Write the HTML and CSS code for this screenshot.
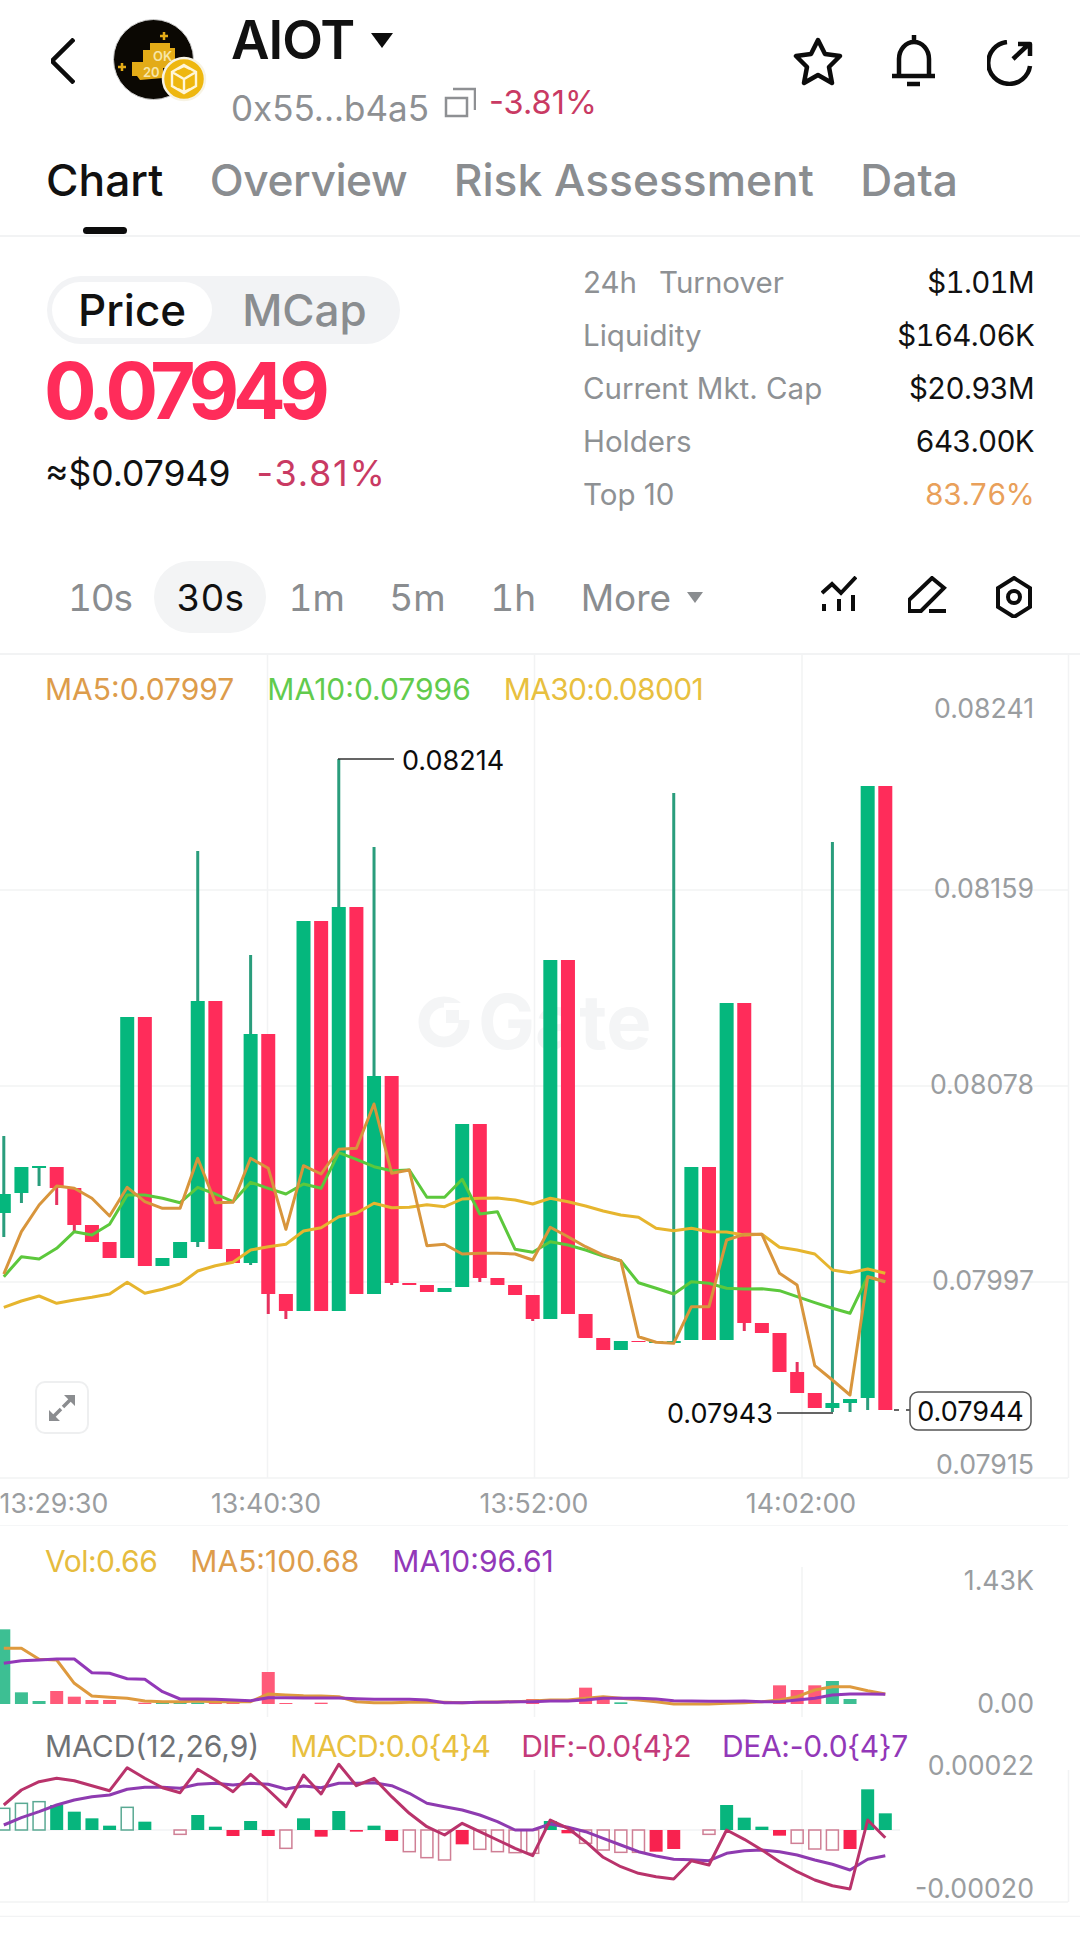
FILE: index.html
```html
<!DOCTYPE html>
<html>
<head>
  <title>AIOT Chart</title>
  <link rel="stylesheet" href="styles.css">
</head>
<body>
<div class="page">
  <div class="header">
    <svg class="back" width="24" height="46" viewBox="51 38 24 46"><polyline points="74,39 52,61 74,83" class="ink"/></svg>
    <div class="avatar">
      <svg width="81" height="81" viewBox="113 19 81 81">
        <circle cx="153.5" cy="59.5" r="40" fill="#0b0803" stroke="#cfcfcf" stroke-width="1"/>
        <polygon points="143,67 143,50 150,50 150,43 170,43 170,48 175,48 175,68 163,68 163,78 140,80 137,76 132,76 132,62 143,62" fill="#e3ab17"/>
        <text x="153" y="61" class="avatar-text">OK</text>
        <text x="143" y="77" class="avatar-text">20</text>
        <path d="M164 32v8M160 36h8M122 63v8M118 67h8" stroke="#e3ab17" stroke-width="2.5"/>
      </svg>
      <svg class="badge" width="46" height="46" viewBox="161 56 46 46">
        <circle cx="184" cy="79" r="21" fill="#eeb70f" stroke="#f7f3e4" stroke-width="2.5"/>
        <path d="M184 65l12 7v14l-12 7-12-7V72zM172 72l12 7 12-7M184 79v14M178 69l6-3 6 3M178 89l6 3 6-3" fill="none" stroke="#fff6d8" stroke-width="2.4"/>
      </svg>
    </div>
    <div class="token">
      <div class="token-name">AIOT<span class="caret-big"></span></div>
      <div class="token-sub">
        <span class="address">0x55...b4a5</span>
        <svg class="copy" width="32" height="31" viewBox="443 87 32 31"><path d="M445 98h21v18h-21zM452 89h22v21" fill="none" stroke="#8e9093" stroke-width="2.5"/></svg>
        <span class="change-small">-3.81%</span>
      </div>
    </div>
    <div class="actions">
      <svg class="act-star" width="52" height="50" viewBox="792 36 52 50"><polygon points="818,40 825,54 840,56 829,67 832,83 818,75 804,83 807,67 796,56 811,54" class="ink"/></svg>
      <svg width="44" height="52" viewBox="892 35 44 52">
        <path d="M899 76V59a15 17 0 0 1 30 0v17M892 76h43M914 35v6M907 84h13" class="ink"/>
      </svg>
      <svg class="act-share" width="46" height="46" viewBox="987 40 46 46">
        <path d="M1007 42A21 21 0 1 0 1030 66M1013 59l16-15M1018 44h12v12" class="ink"/>
      </svg>
    </div>
  </div>

  <div class="tabs">
    <div class="tab active">Chart</div>
    <div class="tab tab-overview">Overview</div>
    <div class="tab">Risk Assessment</div>
    <div class="tab">Data</div>
  </div>

  <div class="summary">
    <div class="price-box">
      <div class="switch">
        <div class="switch-item on">Price</div>
        <div class="switch-item">MCap</div>
      </div>
      <div class="price">0.07949</div>
      <div class="price-sub"><span>≈$0.07949</span><span class="down">-3.81%</span></div>
    </div>
    <div class="stats">
      <div class="stat"><span class="label"><span class="label-gap">24h</span>Turnover</span><span class="value">$1.01M</span></div>
      <div class="stat"><span class="label">Liquidity</span><span class="value">$164.06K</span></div>
      <div class="stat"><span class="label">Current Mkt. Cap</span><span class="value">$20.93M</span></div>
      <div class="stat"><span class="label">Holders</span><span class="value">643.00K</span></div>
      <div class="stat"><span class="label">Top 10</span><span class="value warn">83.76%</span></div>
    </div>
  </div>

  <div class="toolbar">
    <div class="period period-first">10s</div>
    <div class="period on">30s</div>
    <div class="period">1m</div>
    <div class="period">5m</div>
    <div class="period">1h</div>
    <div class="period">More <span class="caret-small"></span></div>
    <div class="tools">
      <svg class="tool-first" width="36" height="36" viewBox="822 579 36 36"><path d="M823 596l10-9 9 9 15-16M825 607v7M840 602v12M854 598v16" class="ink thin"/></svg>
      <svg width="39" height="38" viewBox="909 578 39 38"><path d="M933 580l12 10-23 23h-12v-11zM930 613h17" class="ink thin"/></svg>
      <svg width="38" height="42" viewBox="996 577 38 42"><path d="M1015 579l16 10v19l-16 10-16-10v-19z" class="ink thin"/><circle cx="1015" cy="598" r="6" class="ink thin"/></svg>
    </div>
  </div>

  <div class="pane pane-main">
    <svg width="1080" height="870" viewBox="0 655 1080 870">
      <path d="M0 890H1068M0 1086H1068M0 1282H1068M0 1478H1068M267.500 655V1478M534.500 655V1478M802 655V1478M1068.500 655V1478" class="grid"/>
      <circle cx="444" cy="1022" r="20" fill="none" stroke="#f4f5f6" stroke-width="11"/>
      <rect x="444" y="1003" width="26" height="17" fill="#fff"/>
      <rect x="446" y="1010" width="13" height="13" fill="#f4f5f6"/>
      <text x="478" y="1049" class="watermark">Gate</text>
      <g id="candles"></g>
      <g id="maLines"></g>
      <text x="1034" y="708" class="axis">0.08241</text>
      <text x="1034" y="888" class="axis">0.08159</text>
      <text x="1034" y="1084" class="axis">0.08078</text>
      <text x="1034" y="1280" class="axis">0.07997</text>
      <text x="1034" y="1464" class="axis">0.07915</text>
      <path d="M338 759H394M777 1413H833M894 1410H899M906 1410H910" class="marker"/>
      <text x="402" y="760" class="mark-text">0.08214</text>
      <text x="667" y="1413" class="mark-text">0.07943</text>
      <rect x="910" y="1392" width="121" height="38" rx="8" fill="#fff" stroke="#555" stroke-width="1.500"/>
      <text x="970.500" y="1411" class="mark-text mid">0.07944</text>
      <text x="54" y="1503" class="axis mid">13:29:30</text>
      <text x="266" y="1503" class="axis mid">13:40:30</text>
      <text x="534" y="1503" class="axis mid">13:52:00</text>
      <text x="801" y="1503" class="axis mid">14:02:00</text>
    </svg>
    <div class="legend legend-main">
      <span class="c-ma5">MA5:0.07997</span>
      <span class="c-ma10">MA10:0.07996</span>
      <span class="c-ma30 tight">MA30:0.08001</span>
    </div>
    <div class="expand">
      <svg width="28" height="28" viewBox="48 1394 28 28"><path d="M64 1395h11v11zM49 1410v11h11z" fill="#8b8d90"/><path d="M70 1400l-7 7M54 1416l7-7" stroke="#8b8d90" stroke-width="3.500"/></svg>
    </div>
  </div>

  <div class="pane pane-vol">
    <svg width="1080" height="192" viewBox="0 1525 1080 192">
      <path d="M0 1525H1068" class="grid"/>
      <path d="M267.500 1567V1717M534.500 1567V1717M802 1567V1717" class="grid"/>
      <g id="volBars"></g>
      <g id="volLines"></g>
      <text x="1034" y="1580" class="axis">1.43K</text>
      <text x="1034" y="1703" class="axis">0.00</text>
    </svg>
    <div class="legend legend-vol">
      <span class="c-vol">Vol:0.66</span>
      <span class="c-ma5">MA5:100.68</span>
      <span class="c-purple">MA10:96.61</span>
    </div>
  </div>

  <div class="pane pane-macd">
    <svg width="1080" height="200" viewBox="0 1717 1080 200">
      <path d="M0 1902H1068M267.500 1770V1902M534.500 1770V1902M802 1770V1902M1068.500 1770V1902" class="grid"/>
      <path d="M0 1830H900" class="grid"/>
      <path d="M0 1916.500H1080" class="grid"/>
      <g id="macdBars"></g>
      <g id="macdLines"></g>
      <text x="1034" y="1765" class="axis">0.00022</text>
      <text x="1034" y="1888" class="axis">-0.00020</text>
    </svg>
    <div class="legend legend-macd">
      <span class="c-gray">MACD(12,26,9)</span>
      <span class="c-ma30 tight">MACD:0.0{4}4</span>
      <span class="c-dif tight">DIF:-0.0{4}2</span>
      <span class="c-purple slight">DEA:-0.0{4}7</span>
    </div>
  </div>
</div>
<script src="chart.js"></script>
</body>
</html>
```

FILE: styles.css
```css
body {
  margin: 0;
  padding: 0;
  background: #fff;
  color: #111;
  font-family: Inter, "Liberation Sans", sans-serif;
}
svg {
  display: block;
}
.page {
  width: 1080px;
  height: 1935px;
  overflow: hidden;
}
.ink {
  fill: none;
  stroke: #0c0c0c;
  stroke-width: 4.5;
  stroke-linejoin: round;
}
.thin {
  stroke-width: 4;
  stroke-linejoin: miter;
}

/* header */
.header {
  display: flex;
  align-items: flex-start;
  height: 126px;
  padding-left: 51px;
}
.back {
  margin-top: 38px;
}
.avatar {
  position: relative;
  width: 81px;
  height: 81px;
  margin: 19px 0 0 38px;
}
.avatar-text {
  font-size: 13px;
  font-weight: 600;
  fill: #f7e6a8;
}
.badge {
  position: absolute;
  left: 48px;
  top: 37px;
}
.token {
  margin-left: 37px;
}
.token-name {
  display: flex;
  align-items: center;
  height: 62px;
  margin-top: 9px;
  font-size: 53px;
  font-weight: 600;
  letter-spacing: -1px;
}
.caret-big {
  width: 0;
  height: 0;
  margin-left: 17px;
  border-left: 11px solid transparent;
  border-right: 11px solid transparent;
  border-top: 15px solid #0c0c0c;
}
.token-sub {
  display: flex;
  align-items: center;
  height: 50px;
  margin-top: 12px;
  font-size: 35px;
  color: #8e9093;
}
.copy {
  margin: -11px 0 0 15px;
}
.change-small {
  margin: -12px 0 0 13px;
  font-size: 32.500px;
  color: #c93a63;
}
.actions {
  display: flex;
  align-items: flex-start;
  gap: 48px;
  margin: 35px 47px 0 auto;
}
.act-star {
  margin-top: 1px;
}
.act-share {
  margin: 5px 0 0 3px;
}

/* tabs */
.tabs {
  display: flex;
  gap: 46.500px;
  height: 109px;
  padding-left: 46px;
  border-bottom: 2px solid #f2f3f4;
  font-size: 44.3px;
  font-weight: 500;
  color: #8a8d90;
}
.tab {
  position: relative;
  padding-top: 27px;
  line-height: 54px;
}
.tab.active {
  color: #111;
}
.tab.active::after {
  content: "";
  position: absolute;
  left: 37px;
  bottom: 1px;
  width: 44px;
  height: 7px;
  border-radius: 4px;
  background: #0c0c0c;
}
.tab-overview {
  letter-spacing: -.45px;
}

/* price and stats */
.summary {
  display: flex;
  justify-content: space-between;
  height: 324px;
  padding: 0 46px 0 47px;
}
.switch {
  display: flex;
  align-items: center;
  width: 353px;
  height: 68px;
  box-sizing: border-box;
  margin-top: 39px;
  padding-left: 5px;
  border-radius: 34px;
  background: #f2f3f5;
  font-size: 44px;
  font-weight: 500;
  color: #8a8d90;
}
.switch-item {
  height: 56px;
  line-height: 56px;
  padding: 0 26px;
  border-radius: 28px;
}
.switch-item.on {
  background: #fff;
  color: #111;
}
.switch-item + .switch-item {
  padding-left: 30px;
}
.price {
  margin: 6px 0 0 -3px;
  font-size: 78px;
  line-height: 82px;
  font-weight: 700;
  letter-spacing: -6.300px;
  color: #ff2c5a;
}
.price-sub {
  display: flex;
  align-items: baseline;
  gap: 26px;
  margin: 19px 0 0 -2px;
  font-size: 35.500px;
  line-height: 44px;
}
.down {
  font-size: 36px;
  letter-spacing: 1.8px;
  color: #c93a63;
}
.stats {
  width: 451px;
  margin-top: 19px;
  font-size: 29.500px;
}
.stat {
  display: flex;
  justify-content: space-between;
  height: 53px;
  line-height: 53px;
}
.label {
  color: #8e9194;
}
.label-gap {
  margin-right: 22px;
}
.value {
  font-variant-numeric: tabular-nums;
  letter-spacing: -.7px;
}
.warn {
  color: #e9a05a;
}

/* period toolbar */
.toolbar {
  display: flex;
  align-items: center;
  gap: .5px;
  height: 72px;
  padding: 0 47px 22px 46px;
  font-size: 37px;
  font-variant-numeric: tabular-nums;
  color: #8a8d90;
}
.period {
  display: flex;
  align-items: center;
  height: 72px;
  padding: 0 22px;
}
.period-first {
  letter-spacing: -1.2px;
}
.period.on {
  border-radius: 36px;
  background: #f3f4f5;
  color: #111;
}
.caret-small {
  width: 0;
  height: 0;
  margin-left: 16px;
  border-left: 8px solid transparent;
  border-right: 8px solid transparent;
  border-top: 11px solid #8a8d90;
}
.tools {
  display: flex;
  gap: 48px;
  margin-left: auto;
}
.tool-first {
  margin-right: 3px;
}

/* chart panes */
.pane {
  position: relative;
}
.pane-main {
  border-top: 2px solid #f2f3f4;
  margin-top: -2px;
}
.grid {
  fill: none;
  stroke: #f2f3f4;
  stroke-width: 1.5;
}
.watermark {
  font-size: 76px;
  font-weight: 700;
  fill: #f4f5f6;
}
.axis {
  font-size: 26.700px;
  fill: #9a9da0;
  text-anchor: end;
  dominant-baseline: central;
}
.axis.mid,
.mark-text.mid {
  text-anchor: middle;
}
.marker {
  fill: none;
  stroke: #333;
  stroke-width: 1.5;
}
.mark-text {
  font-size: 27px;
  fill: #0c0c0c;
  dominant-baseline: central;
}
.legend {
  position: absolute;
  left: 45px;
  display: flex;
  gap: 33px;
  font-size: 30px;
  line-height: 36px;
  white-space: nowrap;
}
.legend-main {
  top: 16px;
}
.legend-vol {
  top: 18px;
}
.legend-macd {
  top: 11px;
  gap: 31px;
}
.tight {
  letter-spacing: -.7px;
}
.slight {
  letter-spacing: -.3px;
}
.c-ma5 { color: #dd9c4b; }
.c-ma10 { color: #62cb4d; }
.c-ma30 { color: #e8c03f; }
.c-vol { color: #e6bc3e; letter-spacing: -.5px; }
.c-purple { color: #9238b8; }
.c-gray { color: #6f7276; }
.c-dif { color: #c33a7a; }
.expand {
  position: absolute;
  left: 35px;
  top: 726px;
  width: 54px;
  height: 53px;
  box-sizing: border-box;
  display: flex;
  align-items: center;
  justify-content: center;
  border: 2px solid #eeeff0;
  border-radius: 10px;
  background: #fff;
}
```

FILE: chart.js
```js
var STEP = 17.63;
var START = 3.8;
var GREEN = "#05b77d";
var RED = "#ff2c5a";

function cx(i) {
  return START + STEP * i;
}

// [colour, body top, body bottom, wick top, wick bottom]
var candles = [
  ["g", 1194, 1213, 1136, 1237], ["g", 1167, 1193, 0, 1203], ["g", 1166, 1168, 0, 1186],
  ["r", 1167, 1188, 0, 1205], ["r", 1188, 1225, 0, 1232], ["r", 1225, 1242], ["r", 1242, 1258],
  ["g", 1017, 1258], ["r", 1017, 1266], ["g", 1258, 1266], ["g", 1242, 1258],
  ["g", 1001, 1242, 851, 1247], ["r", 1001, 1249], ["r", 1249, 1263],
  ["g", 1034, 1263, 955, 1265], ["r", 1034, 1294, 0, 1314], ["r", 1294, 1311, 0, 1319],
  ["g", 921, 1311], ["r", 921, 1311], ["g", 907, 1311, 759], ["r", 907, 1294],
  ["g", 1076, 1294, 847], ["r", 1076, 1283, 0, 1285], ["r", 1283, 1285], ["r", 1285, 1292],
  ["g", 1288, 1292], ["g", 1124, 1287], ["r", 1124, 1278, 0, 1282], ["r", 1278, 1285],
  ["r", 1285, 1295], ["r", 1295, 1319, 0, 1321], ["g", 960, 1319], ["r", 960, 1314],
  ["r", 1314, 1338], ["r", 1338, 1350], ["g", 1341, 1350], ["r", 1341, 1342], ["g", 1341, 1343],
  ["g", 1341, 1343, 793], ["g", 1167, 1340], ["r", 1167, 1340], ["g", 1003, 1340],
  ["r", 1003, 1323, 0, 1331], ["r", 1323, 1333], ["r", 1333, 1372], ["r", 1372, 1393, 1362],
  ["r", 1393, 1408], ["g", 1403, 1408, 842, 1412], ["g", 1399, 1403, 0, 1412],
  ["g", 786, 1398, 0, 1410], ["r", 786, 1410]
];

// line values are offsets from the pane origin, times 3
var ma5 = [522,395,315,258,265,295,348,262,305,325,325,175,308,307,175,205,388,197,222,148,145,12,220,210,437,433,462,460,460,462,480,382,410,440,465,482,710,727,730,620,620,420,403,403,520,555,797,840,885,530,545];
var ma10 = [530,470,477,445,395,405,373,285,285,295,308,262,282,305,247,265,282,252,265,158,178,200,212,210,292,292,238,342,335,448,457,425,435,450,468,482,548,565,582,545,550,565,567,566,572,590,608,625,640,530,545];
var ma30 = [622,603,588,610,600,592,582,547,580,568,552,513,497,487,450,440,433,393,383,350,340,310,323,322,314,320,297,295,294,300,312,295,305,318,333,345,352,385,392,385,395,396,405,403,442,450,462,510,518,507,520];

var volMa5 = [385,385,418,420,490,528,532,535,543,545,545,543,545,545,545,522,525,527,528,530,545,548,548,547,547,547,548,547,546,545,543,540,540,535,530,535,540,545,552,552,552,550,548,545,540,530,510,500,500,512,522];
var volMa10 = [430,422,420,417,417,458,460,476,478,515,537,537,538,540,542,533,533,534,534,534,536,538,538,538,540,548,548,547,547,545,545,543,543,540,535,535,535,537,542,543,544,544,543,545,545,540,535,525,522,522,523];
// [index, top, colour]
var volBars = [[0,328,"g"],[1,517,"g"],[2,543,"g"],[3,513,"r"],[4,530,"r"],[5,540,"r"],[6,540,"r"],[8,548,"r"],[9,545,"g"],[10,547,"g"],[11,547,"g"],[12,548,"r"],[13,548,"r"],[15,456,"r"],[16,549,"r"],[18,548,"r"],[30,537,"r"],[33,503,"r"],[34,530,"r"],[35,547,"g"],[44,496,"r"],[45,510,"r"],[46,496,"r"],[47,483,"g"],[48,537,"g"]];

var dif = [855,810,785,775,782,797,812,743,775,803,818,748,780,815,763,810,860,765,822,733,797,775,830,880,920,945,910,935,960,985,1007,900,925,965,1012,1040,1060,1070,1077,1022,1035,930,958,990,1025,1055,1080,1097,1107,900,953];
var dea = [915,893,875,855,840,830,825,808,802,802,805,793,790,795,790,793,807,798,803,790,790,788,797,820,850,860,870,885,905,930,930,912,922,935,955,975,995,1008,1018,1019,1022,1000,992,990,995,1005,1020,1033,1050,1018,1007];
// [index, value, colour, hollow]
var macdBars = [[0,865,"g",1],[1,850,"g",1],[2,845,"g",1],[3,855,"g"],[4,875,"g"],[5,895,"g"],[6,917,"g"],[7,862,"g",1],[8,905,"g"],[10,943,"r",1],[11,885,"g"],[12,920,"g"],[13,948,"r"],[14,903,"g"],[15,948,"r"],[16,985,"r",1],[17,895,"g"],[18,950,"r"],[19,873,"g"],[20,935,"r"],[21,917,"g"],[22,963,"r"],[23,995,"r",1],[24,1013,"r",1],[25,1020,"r",1],[26,973,"r"],[27,988,"r",1],[28,995,"r",1],[29,998,"r",1],[30,1000,"r",1],[31,903,"g"],[32,940,"r"],[33,970,"r",1],[34,990,"r",1],[35,997,"r",1],[36,997,"r",1],[37,995,"r"],[38,987,"r"],[40,943,"r",1],[41,855,"g"],[42,893,"g"],[43,920,"g"],[44,947,"r"],[45,970,"r",1],[46,987,"r",1],[47,990,"r",1],[48,987,"r"],[49,808,"g"],[50,880,"g"]];

function rect(x, y, w, h, fill, extra) {
  return '<rect x="' + x + '" y="' + y + '" width="' + w + '" height="' + h + '" fill="' + fill + '" ' + (extra || "") + '/>';
}

function line(values, origin, color, width) {
  var pts = values.map(function(v, i) {
    return cx(i).toFixed(1) + "," + (origin + v / 3).toFixed(1);
  });
  return '<polyline points="' + pts.join(" ") + '" fill="none" stroke="' + color + '" stroke-width="' + width + '" stroke-linejoin="round"/>';
}

var html = "";
candles.forEach(function(c, i) {
  var green = c[0] == "g";
  var x = cx(i);
  if (c[3] || c[4]) {
    var top = c[3] || c[1];
    var bottom = c[4] || c[2];
    html += rect(x - 1.5, top, 3, bottom - top, green ? "#2a9d7c" : "#e6325f");
  }
  html += rect(x - 7, c[1], 14, c[2] - c[1], green ? GREEN : RED);
});
document.getElementById("candles").innerHTML = html;

document.getElementById("maLines").innerHTML =
  line(ma30, 1100, "#e6b52e", 3) + line(ma10, 1100, "#5cc83c", 3) + line(ma5, 1100, "#d8953c", 3);

html = "";
volBars.forEach(function(b) {
  var y = 1520 + b[1] / 3;
  html += rect(cx(b[0]) - 6.5, y, 13, 1704 - y, b[2] == "g" ? "#3dbf93" : "#ff5a79");
});
document.getElementById("volBars").innerHTML = html;
document.getElementById("volLines").innerHTML =
  line(volMa5, 1520, "#de9a3e", 3) + line(volMa10, 1520, "#9238b8", 3);

html = "";
macdBars.forEach(function(b) {
  var base = 1830;
  var v = 1520 + b[1] / 3;
  var y = Math.min(v, base);
  var h = Math.abs(v - base);
  var color = b[2] == "g" ? "#07b57d" : "#f8224f";
  if (b[3]) {
    var edge = b[2] == "g" ? "#5aa993" : "#cf7f95";
    html += rect(cx(b[0]) - 6, y, 12, h, "none", 'stroke="' + edge + '" stroke-width="1.5"');
  } else {
    html += rect(cx(b[0]) - 6.5, y, 13, h, color);
  }
});
document.getElementById("macdBars").innerHTML = html;
document.getElementById("macdLines").innerHTML =
  line(dea, 1520, "#8e3bb0", 3) + line(dif, 1520, "#b9336b", 3);
```
